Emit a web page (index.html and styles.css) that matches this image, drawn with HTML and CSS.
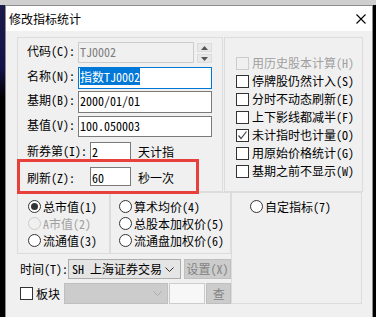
FILE: index.html
```html
<!DOCTYPE html>
<html>
<head>
    <title>修改指标统计</title>
    <link rel="stylesheet" href="styles.css">
</head>
<body>
<div class="screen">
    <div class="desk-top"></div>
    <div class="desk">
        <div class="edge-l"></div>
        <div class="dialog">
            <div class="titlebar">
                <span class="title">修改指标统计</span>
                <svg class="close" width="10" height="10" viewBox="0 0 10 10"><path d="M0.5 0.5L9.5 9.5M9.5 0.5L0.5 9.5" stroke="#000" stroke-width="1.1"/></svg>
            </div>
            <div class="content">
                <div class="top-row">
                    <div class="group main">
                        <div class="row r1">
                            <span class="lbl">代码(C):</span>
                            <div class="edit wide off">TJ0002</div>
                            <div class="spin">
                                <div class="spin-btn"><svg width="7" height="4" viewBox="0 0 7 4"><path d="M0 4L3.5 0L7 4Z" fill="#555"/></svg></div>
                                <div class="spin-btn"><svg width="7" height="4" viewBox="0 0 7 4"><path d="M0 0L3.5 4L7 0Z" fill="#555"/></svg></div>
                            </div>
                        </div>
                        <div class="row r2">
                            <span class="lbl">名称(N):</span>
                            <div class="edit wide focus"><span class="sel">指数TJ0002</span></div>
                        </div>
                        <div class="row r3">
                            <span class="lbl">基期(B):</span>
                            <div class="edit wide">2000/01/01</div>
                        </div>
                        <div class="row r4">
                            <span class="lbl">基值(V):</span>
                            <div class="edit wide">100.050003</div>
                        </div>
                        <div class="row r5">
                            <span class="lbl lbl-long">新券第(I):</span>
                            <div class="edit short">2</div>
                            <span class="unit">天计指</span>
                        </div>
                        <div class="row r6">
                            <span class="lbl lbl-long">刷新(Z):</span>
                            <div class="edit short">60</div>
                            <span class="unit">秒一次</span>
                        </div>
                    </div>
                    <div class="group opts">
                        <div class="check off"><span class="box"></span>用历史股本计算(H)</div>
                        <div class="check"><span class="box"></span>停牌股仍然计入(S)</div>
                        <div class="check"><span class="box"></span>分时不动态刷新(E)</div>
                        <div class="check"><span class="box"></span>上下影线都减半(F)</div>
                        <div class="check"><span class="box"><svg width="11" height="11" viewBox="0 0 11 11"><path d="M1.5 5.5L4 8.5L9.5 1.5" fill="none" stroke="#444" stroke-width="1.2"/></svg></span>未计指时也计量(O)</div>
                        <div class="check"><span class="box"></span>用原始价格统计(G)</div>
                        <div class="check"><span class="box"></span>基期之前不显示(W)</div>
                    </div>
                </div>
                <div class="lower">
                    <div class="lower-left">
                        <div class="radio-row">
                            <div class="group rad1">
                                <div class="radio on"><span class="dot"></span>总市值(1)</div>
                                <div class="radio off"><span class="dot"></span>A市值(2)</div>
                                <div class="radio"><span class="dot"></span>流通值(3)</div>
                            </div>
                            <div class="group rad2">
                                <div class="radio"><span class="dot"></span>算术均价(4)</div>
                                <div class="radio"><span class="dot"></span>总股本加权价(5)</div>
                                <div class="radio"><span class="dot"></span>流通盘加权价(6)</div>
                            </div>
                        </div>
                        <div class="ctrl-row time-row">
                            <span class="lbl-time">时间(T):</span>
                            <div class="combo">
                                <span>SH 上海证券交易</span>
                                <svg width="9" height="5" viewBox="0 0 9 5"><path d="M0.5 0.5L4.5 4.5L8.5 0.5" fill="none" stroke="#333" stroke-width="1"/></svg>
                            </div>
                            <div class="btn off">设置(X)</div>
                        </div>
                        <div class="ctrl-row block-row">
                            <div class="check plain"><span class="box"></span>板块</div>
                            <div class="combo off">
                                <span></span>
                                <svg width="9" height="5" viewBox="0 0 9 5"><path d="M0.5 0.5L4.5 4.5L8.5 0.5" fill="none" stroke="#aaa" stroke-width="1"/></svg>
                            </div>
                            <div class="edit tiny off"></div>
                            <div class="btn off q">查</div>
                        </div>
                    </div>
                    <div class="group rad3">
                        <div class="radio"><span class="dot"></span>自定指标(7)</div>
                    </div>
                </div>
                <div class="mark"></div>
            </div>
        </div>
        <div class="edge-r"></div>
    </div>
</div>
</body>
</html>
```

FILE: styles.css
```css
body {
    margin: 0;
    font-family: "Noto Sans CJK SC", sans-serif;
    font-size: 12px;
    font-feature-settings: "hwid";
    color: #000;
}
.screen {
    width: 376px;
    height: 317px;
    overflow: hidden;
    background: #000;
}
.desk-top {
    height: 5px;
    background: #cfcfcf;
}
.desk {
    display: flex;
    height: 312px;
}
.edge-l {
    width: 5px;
    background: linear-gradient(#1b1b4a 0%, #12124a 20%, #000 30%);
}
.edge-r {
    width: 3px;
    background: #000;
}
.dialog {
    width: 368px;
    box-sizing: border-box;
    border: 1px solid #8c8c8c;
    border-bottom: none;
    display: flex;
    flex-direction: column;
}
.titlebar {
    height: 25px;
    background: #fff;
    display: flex;
    align-items: center;
    justify-content: space-between;
    padding: 0 6px 0 3px;
}
.title {
    line-height: 14px;
}
.close {
    display: block;
    margin-top: 1px;
}
.content {
    flex: 1;
    background: #f0f0f0;
    padding: 6px 0 0 11px;
    position: relative;
}
.group {
    border: 1px solid #dcdcdc;
    box-sizing: border-box;
}
.top-row {
    display: flex;
    gap: 1px;
    height: 155px;
}
.main {
    width: 206px;
    padding: 4px 0 0 9px;
}
.opts {
    width: 139px;
    padding: 16px 0 0 11px;
}
.row {
    display: flex;
    align-items: flex-start;
}
.r1 { height: 21px; }
.r2 { height: 22px; margin-top: 4px; }
.r3 { height: 22px; margin-top: 2px; }
.r4 { height: 21px; margin-top: 3px; }
.r5 { height: 20px; margin-top: 5px; }
.r6 { height: 19px; margin-top: 5px; }
.lbl {
    width: 51px;
    line-height: 14px;
    padding-top: 2px;
}
.lbl-long {
    width: 63px;
}
.r6 .lbl {
    padding-top: 4px;
}
.edit {
    box-sizing: border-box;
    height: 100%;
    border: 1px solid #7a7a7a;
    background: #fff;
    line-height: 14px;
    padding: 2px 0 0 1px;
    white-space: nowrap;
}
.edit.wide {
    width: 134px;
}
.edit.off {
    border-color: #cccccc;
    background: #f0f0f0;
    color: #7d7d7d;
}
.r1 .edit.wide {
    width: 116px;
}
.edit.focus {
    border-color: #0078d7;
}
.sel {
    background: #0078d7;
    color: #fff;
}
.edit.short {
    width: 41px;
}
.r6 .edit {
    padding-top: 3px;
}
.unit {
    margin-left: 7px;
    line-height: 14px;
    padding-top: 3px;
}
.r6 .unit {
    padding-top: 4px;
}
.spin {
    margin-left: 3px;
    display: flex;
    flex-direction: column;
    gap: 2px;
    padding-top: 1px;
}
.spin-btn {
    width: 15px;
    height: 9px;
    box-sizing: border-box;
    border: 1px solid #dcdcdc;
    background: #e8e8e8;
    display: flex;
    align-items: center;
    justify-content: center;
}
.check {
    display: flex;
    align-items: center;
    height: 18px;
    line-height: 14px;
    white-space: nowrap;
}
.box {
    width: 13px;
    height: 13px;
    box-sizing: border-box;
    border: 1px solid #333;
    background: #fff;
    margin-right: 3px;
    display: flex;
    align-items: center;
    justify-content: center;
    flex: none;
}
.check.off {
    color: #a0a0a0;
}
.check.off .box {
    border-color: #cccccc;
    background: #f0f0f0;
}
.lower {
    display: flex;
}
.lower-left {
    width: 214px;
}
.radio-row {
    display: flex;
    height: 62px;
}
.rad1 {
    width: 93px;
    padding: 5px 0 0 10px;
}
.rad2 {
    width: 121px;
    padding: 5px 0 0 8px;
}
.rad3 {
    width: 131px;
    height: 112px;
    padding: 5px 0 0 18px;
}
.radio {
    display: flex;
    align-items: center;
    height: 17px;
    line-height: 14px;
    white-space: nowrap;
}
.dot {
    width: 13px;
    height: 13px;
    box-sizing: border-box;
    border: 1px solid #333;
    border-radius: 50%;
    background: #fff;
    margin-right: 2px;
    display: flex;
    align-items: center;
    justify-content: center;
    flex: none;
}
.radio.on .dot::after {
    content: "";
    width: 7px;
    height: 7px;
    border-radius: 50%;
    background: #333;
}
.radio.off {
    color: #a0a0a0;
}
.radio.off .dot {
    border-color: #cccccc;
    background: #f0f0f0;
}
.ctrl-row {
    display: flex;
    align-items: center;
}
.time-row {
    height: 20px;
    margin-top: 5px;
    padding-left: 3px;
}
.lbl-time {
    width: 48px;
    line-height: 14px;
}
.combo {
    box-sizing: border-box;
    height: 100%;
    width: 113px;
    border: 1px solid #adadad;
    background: #e5e5e5;
    display: flex;
    align-items: center;
    justify-content: space-between;
    padding: 0 6px 0 3px;
    line-height: 14px;
}
.combo.off {
    width: 105px;
    border-color: #bfbfbf;
    background: #cccccc;
    padding-right: 5px;
}
.btn {
    box-sizing: border-box;
    height: 100%;
    border: 1px solid #bfbfbf;
    background: #cccccc;
    display: flex;
    align-items: center;
    justify-content: center;
    line-height: 14px;
}
.btn.off {
    color: #838383;
}
.time-row .btn {
    width: 47px;
    margin-left: 3px;
}
.block-row {
    height: 21px;
    margin-top: 4px;
    padding-left: 3px;
}
.check.plain {
    width: 42px;
    margin-right: 3px;
}
.edit.tiny {
    width: 37px;
    margin-left: 1px;
    background: #f7f7f7;
}
.block-row .btn {
    width: 25px;
    margin-left: 1px;
}
.mark {
    position: absolute;
    left: 11px;
    top: 128px;
    width: 182px;
    height: 35px;
    box-sizing: border-box;
    border: 3px solid #e8413c;
}
```
